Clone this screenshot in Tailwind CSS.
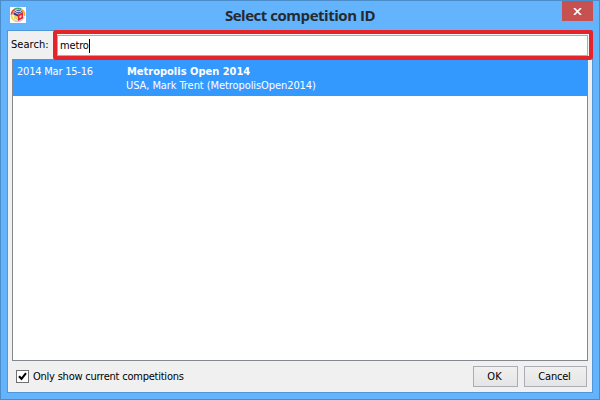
<!DOCTYPE html>
<html lang="en">
<head>
<meta charset="utf-8">
<title>Select competition ID</title>
<script src="https://cdn.jsdelivr.net/npm/@tailwindcss/browser@4"></script>
</head>
<body class="w-[600px] h-[400px] overflow-hidden font-['DejaVu_Sans_Condensed','DejaVu_Sans',sans-serif] font-stretch-condensed text-[11px] leading-[14px] text-black">
<div class="w-[600px] h-[400px] bg-[#63b4fd] border border-[#4b8dc9] flex flex-col px-[6px] pb-[6px]">
  <header class="h-[29px] shrink-0 relative flex justify-center">
    <svg class="absolute left-[3px] top-[6px]" width="16" height="16" viewBox="0 0 16 16">
      <rect width="16" height="16" fill="#fff"/>
      <g fill="none" stroke-width="1.7">
        <path d="M1.5 8A6.5 6.5 0 0 1 5 2.2" stroke="#e43838"/>
        <path d="M4.5 2.4A6.6 6.6 0 0 1 11.5 2.4" stroke="#45a968"/>
        <path d="M11.2 2.2A6.6 6.6 0 0 1 14.4 9" stroke="#f5a83d"/>
        <path d="M1.5 7.5A6.6 6.6 0 0 0 5 13.8" stroke="#f1d943"/>
        <path d="M4.5 13.5A6.6 6.6 0 0 0 14 10" stroke="#c3cbe6"/>
      </g>
      <path d="M4 4.5 8.5 2.5 13 4.5 8.5 7z" fill="#4a5aa6"/>
      <path d="M6 4.5h5" stroke="#c9cce8"/>
      <path d="M3.5 5 8 7.5v6L4 11.5z" fill="#e8d36a"/>
      <path d="M3.5 5 8 7.5v2L3.5 7.5z" fill="#343a82"/>
      <path d="M8 7.5 13 5v6.2L8 14z" fill="#df2630"/>
      <path d="M9.5 9 11.5 8v2.3l-2 1z" fill="#fbd4c7"/>
    </svg>
    <h1 class="mt-[4px] font-['Open_Sans','Noto_Sans',sans-serif] font-bold text-[15px] leading-[20px] tracking-[-0.47px] text-[#252b30] whitespace-nowrap font-stretch-normal">Select competition ID</h1>
    <button class="absolute right-0 top-0 w-[31px] h-[20px] bg-[#c75050] flex items-center justify-center" aria-label="Close">
      <svg width="9" height="7" viewBox="0 0 9 7"><path d="M1 0 8 7M8 0 1 7" stroke="#fff" stroke-width="1.7"/></svg>
    </button>
  </header>
  <main class="w-[586px] h-[363px] bg-[#f0f0f0] border border-[#5097da] flex flex-col">
    <div class="h-[28px] shrink-0 flex relative z-10">
      <label class="w-[45px] shrink-0 pl-[3px] pt-[7px]"><span class="tracking-[0.05px] whitespace-nowrap">Search:</span></label>
      <div class="w-[540px] h-[30px] shrink-0 -mt-px border-[4px] border-[#e52429] rounded-[3px] bg-[#f5f5f5]">
        <div class="w-[531px] h-[21px] mt-px border border-[#abadb3] bg-white flex items-center pl-[2px]"><span class="tracking-[-0.15px]">metro</span><span class="w-px h-[14px] bg-black"></span></div>
      </div>
    </div>
    <section class="ml-[4px] w-[576px] h-[302px] shrink-0 border border-[#828790] bg-white">
      <div class="h-[36px] bg-[#3399ff] text-white flex pl-[4px] pt-[4px] whitespace-nowrap">
        <div class="w-[109px] pt-px tracking-[-0.22px]">2014 Mar 15-16</div>
        <div><div class="font-bold pl-px pt-px">Metropolis Open 2014</div><div class="tracking-[-0.08px]">USA, Mark Trent (MetropolisOpen2014)</div></div>
      </div>
    </section>
    <footer class="h-[31px] flex items-center pl-[8px] pr-[5px]">
      <span class="w-[13px] h-[13px] border border-[#707070] bg-white flex items-center justify-center">
        <svg width="9" height="9" viewBox="0 0 9 9"><path d="M1 4.2 3.5 6.8 8 1.2" fill="none" stroke="#000" stroke-width="2.1"/></svg>
      </span>
      <span class="ml-[4px] tracking-[-0.23px]">Only show current competitions</span>
      <button class="ml-auto w-[45px] h-[21px] border border-[#acacb4] bg-linear-to-b from-[#f0f0f0] to-[#e5e5e5] pr-[2px]">OK</button>
      <button class="ml-[6px] w-[63px] h-[21px] border border-[#acacb4] bg-linear-to-b from-[#f0f0f0] to-[#e5e5e5] pr-[2px] tracking-[-0.2px]">Cancel</button>
    </footer>
  </main>
</div>
</body>
</html>
